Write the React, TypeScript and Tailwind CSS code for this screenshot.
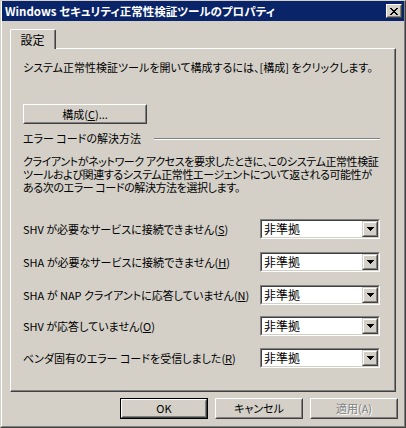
import React from "react";

const font = "font-['Noto_Sans_CJK_JP','Noto_Sans',sans-serif] [font-feature-settings:'palt']";

function Raised({ children, className = "" }: { children?: React.ReactNode; className?: string }) {
  return (
    <div className={"border border-t-white border-l-white border-b-[#404040] border-r-[#404040] " + className}>
      <div className="h-full w-full border border-t-[#d4d0c8] border-l-[#d4d0c8] border-b-[#808080] border-r-[#808080] flex items-center justify-center">
        {children}
      </div>
    </div>
  );
}

function Btn({ children, isDefault = false, disabled = false, className = "" }: { children: React.ReactNode; isDefault?: boolean; disabled?: boolean; className?: string }) {
  const text = (
    <span className={"text-[11px] leading-[13px] whitespace-nowrap " + (disabled ? "text-[#808080] [text-shadow:1px_1px_0_#ffffff]" : "text-black")}>
      {children}
    </span>
  );
  if (isDefault) {
    return (
      <div className={"border border-black " + className}>
        <Raised className="h-full w-full">{text}</Raised>
      </div>
    );
  }
  return <Raised className={className}>{text}</Raised>;
}

function Arrow() {
  return (
    <svg width="7" height="4" viewBox="0 0 7 4" shapeRendering="crispEdges">
      <rect x="0" y="0" width="7" height="1" fill="#000" />
      <rect x="1" y="1" width="5" height="1" fill="#000" />
      <rect x="2" y="2" width="3" height="1" fill="#000" />
      <rect x="3" y="3" width="1" height="1" fill="#000" />
    </svg>
  );
}

function Combo() {
  return (
    <div className="w-[120px] h-[20px] border border-t-[#808080] border-l-[#808080] border-b-white border-r-white shrink-0">
      <div className="h-full w-full border border-t-[#404040] border-l-[#404040] border-b-[#d4d0c8] border-r-[#d4d0c8] bg-white flex">
        <div className="flex-1 pl-[2px] text-[12px] leading-[16px] text-black">非準拠</div>
        <div className="w-[16px] h-full border border-t-[#d4d0c8] border-l-[#d4d0c8] border-b-[#404040] border-r-[#404040] bg-[#d4d0c8]">
          <div className="h-full w-full border border-t-white border-l-white border-b-[#808080] border-r-[#808080] flex items-center justify-center">
            <Arrow />
          </div>
        </div>
      </div>
    </div>
  );
}

function Row({ label, acc, mt }: { label: string; acc: string; mt: string }) {
  return (
    <div className={"flex items-center h-[20px] " + mt}>
      <span className="flex-1 min-w-0 text-[11px] leading-[13px] whitespace-nowrap">
        {label}(<span className="underline underline-offset-[1px]">{acc}</span>)
      </span>
      <Combo />
    </div>
  );
}

function CloseX() {
  return (
    <svg width="8" height="7" viewBox="0 0 8 7" shapeRendering="crispEdges">
      {[0, 1, 2, 3, 4, 5, 6].map((i) => (
        <g key={i}>
          <rect x={i} y={i} width="2" height="1" fill="#000" />
          <rect x={6 - i} y={i} width="2" height="1" fill="#000" />
        </g>
      ))}
    </svg>
  );
}

export default function App() {
  return (
    <div className={"w-[406px] h-[428px] bg-[#d4d0c8] text-black border border-t-[#d4d0c8] border-l-[#d4d0c8] border-b-[#404040] border-r-[#404040] " + font}>
      <div className="h-full w-full border-l border-r border-b border-l-white border-r-[#808080] border-b-[#808080] flex flex-col">
        {/* title bar */}
        <div className="h-[20px] bg-[#0a246a] flex items-center justify-between pl-[3px] pr-[2px]">
          <span className="text-white font-bold text-[11.5px] leading-[14px] whitespace-nowrap">
            Windows セキュリティ正常性検証ツールのプロパティ
          </span>
          <div className="w-[16px] h-[14px] bg-[#d4d0c8] border border-t-white border-l-white border-b-[#404040] border-r-[#404040]">
            <div className="h-full w-full border border-t-[#d4d0c8] border-l-[#d4d0c8] border-b-[#808080] border-r-[#808080] flex items-center justify-center">
              <CloseX />
            </div>
          </div>
        </div>

        {/* tab */}
        <div className="mt-[8px] ml-[8px] flex">
          <div className="relative z-10 -mb-[1px] w-[46px] h-[20px] bg-[#d4d0c8] rounded-t-[2px] border-t border-l border-r border-t-white border-l-white border-r-[#404040]">
            <div className="h-full w-full border-r border-r-[#808080] flex items-center justify-center pb-[1px]">
              <span className="text-[12px] leading-[13px]">設定</span>
            </div>
          </div>
        </div>

        {/* panel */}
        <div className="ml-[8px] w-[386px] h-[344px] border border-t-white border-l-white border-b-[#404040] border-r-[#404040]">
          <div className="h-full w-full border-b border-r border-b-[#808080] border-r-[#808080] flex flex-col pl-[12px] pr-[14px]">
            <div className="mt-[12px] text-[11px] leading-[13px] whitespace-nowrap">
              システム正常性検証ツールを開いて構成するには、[構成] をクリックします。
            </div>
            <Btn className="mt-[30px] w-[124px] h-[20px]">
              構成(<span className="underline underline-offset-[1px]">C</span>)...
            </Btn>
            <div className="mt-[8px] flex items-center h-[13px]">
              <span className="text-[11px] leading-[13px] whitespace-nowrap">エラー コードの解決方法</span>
              <div className="ml-auto w-[226px] h-[2px] border-t border-b border-t-[#808080] border-b-white" />
            </div>
            <div className="mt-[10px] text-[11px] leading-[13px] tracking-[-0.4px] whitespace-nowrap">
              クライアントがネットワーク アクセスを要求したときに、このシステム正常性検証
              <br />
              ツールおよび関連するシステム正常性エージェントについて返される可能性が
              <br />
              ある次のエラー コードの解決方法を選択します。
            </div>
            <Row mt="mt-[25px]" label="SHV が必要なサービスに接続できません" acc="S" />
            <Row mt="mt-[13px]" label="SHA が必要なサービスに接続できません" acc="H" />
            <Row mt="mt-[13px]" label="SHA が NAP クライアントに応答していません" acc="N" />
            <Row mt="mt-[11px]" label="SHV が応答していません" acc="O" />
            <Row mt="mt-[12px]" label="ベンダ固有のエラー コードを受信しました" acc="R" />
          </div>
        </div>

        {/* buttons */}
        <div className="mt-[6px] flex justify-end gap-[7px] pr-[6px]">
          <Btn isDefault className="w-[88px] h-[21px]">OK</Btn>
          <Btn className="w-[88px] h-[21px]">キャンセル</Btn>
          <Btn disabled className="w-[88px] h-[21px]">適用(A)</Btn>
        </div>
      </div>
    </div>
  );
}
